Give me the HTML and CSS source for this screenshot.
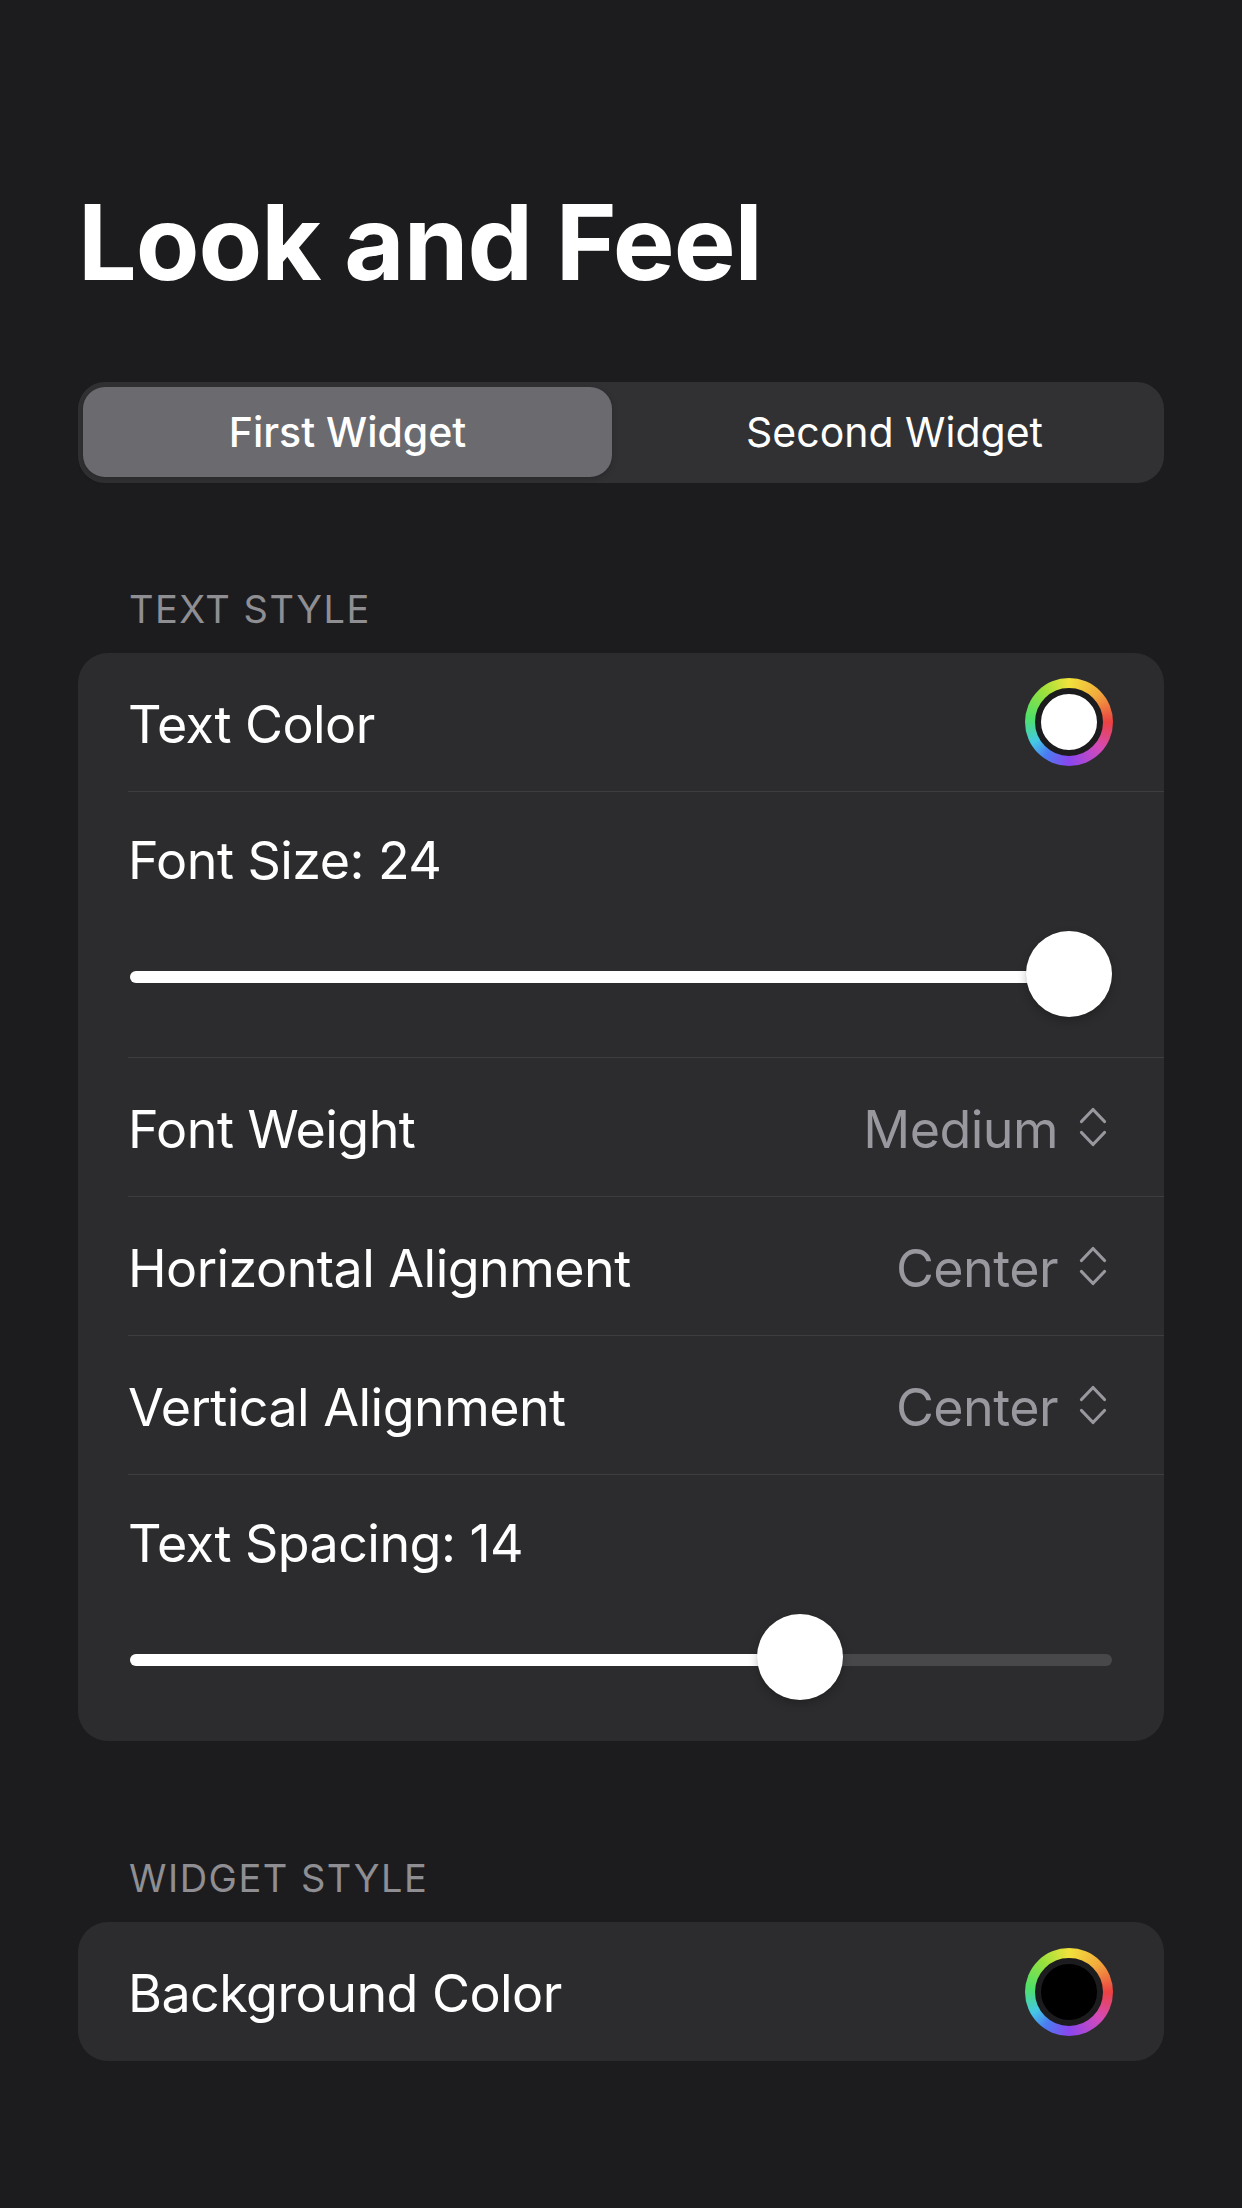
FILE: index.html
```html
<!DOCTYPE html>
<html lang="en">
<head>
<meta charset="utf-8">
<title>Look and Feel</title>
<link rel="stylesheet" href="styles.css">
</head>
<body>
<main class="screen">
  <h1 class="title">Look and Feel</h1>

  <div class="segmented">
    <div class="segment is-selected">First Widget</div>
    <div class="segment">Second Widget</div>
  </div>

  <section class="group group-first">
    <h2 class="group-header">TEXT STYLE</h2>
    <div class="card">
      <div class="row">
        <div class="row-inner">
          <span class="label">Text Color</span>
          <div class="well"><div class="well-inner well-white"></div></div>
        </div>
      </div>
      <div class="row">
        <div class="row-inner slider-row">
          <div class="label">Font Size: 24</div>
          <div class="slider" style="--value: 1">
            <div class="track"><div class="fill"></div></div>
            <div class="thumb"></div>
          </div>
        </div>
      </div>
      <div class="row">
        <div class="row-inner">
          <span class="label">Font Weight</span>
          <div class="picker">
            <span class="picker-value">Medium</span>
            <svg class="chevrons" width="28" height="40" viewBox="0 0 28 40"><path d="M2.5 14.5 L14 2.5 L25.5 14.5 M2.5 25.5 L14 37.5 L25.5 25.5"/></svg>
          </div>
        </div>
      </div>
      <div class="row">
        <div class="row-inner">
          <span class="label">Horizontal Alignment</span>
          <div class="picker">
            <span class="picker-value">Center</span>
            <svg class="chevrons" width="28" height="40" viewBox="0 0 28 40"><path d="M2.5 14.5 L14 2.5 L25.5 14.5 M2.5 25.5 L14 37.5 L25.5 25.5"/></svg>
          </div>
        </div>
      </div>
      <div class="row">
        <div class="row-inner">
          <span class="label">Vertical Alignment</span>
          <div class="picker">
            <span class="picker-value">Center</span>
            <svg class="chevrons" width="28" height="40" viewBox="0 0 28 40"><path d="M2.5 14.5 L14 2.5 L25.5 14.5 M2.5 25.5 L14 37.5 L25.5 25.5"/></svg>
          </div>
        </div>
      </div>
      <div class="row">
        <div class="row-inner slider-row">
          <div class="label">Text Spacing: 14</div>
          <div class="slider" style="--value: 0.7">
            <div class="track"><div class="fill"></div></div>
            <div class="thumb"></div>
          </div>
        </div>
      </div>
    </div>
  </section>

  <section class="group group-second">
    <h2 class="group-header">WIDGET STYLE</h2>
    <div class="card">
      <div class="row">
        <div class="row-inner">
          <span class="label">Background Color</span>
          <div class="well"><div class="well-inner well-black"></div></div>
        </div>
      </div>
    </div>
  </section>
</main>
</body>
</html>
```

FILE: styles.css
```css
* {
  box-sizing: border-box;
}

html, body {
  margin: 0;
  padding: 0;
  background: #1c1c1e;
}

body {
  font-family: Inter, "Noto Sans", "Liberation Sans", sans-serif;
  color: #ffffff;
  min-height: 2208px;
}

.screen {
  padding: 190px 78px 0 78px;
}

.title {
  margin: 0;
  font-size: 104px;
  line-height: 104px;
  font-weight: 700;
  letter-spacing: -1px;
}

.segmented {
  margin-top: 88px;
  height: 101px;
  padding: 5px 5px 6px 5px;
  background: #313134;
  border-radius: 27px;
  display: flex;
  gap: 18px;
}

.segment {
  flex: 1;
  display: flex;
  align-items: center;
  justify-content: center;
  font-size: 41px;
  line-height: 41px;
  font-weight: 400;
  border-radius: 22px;
  color: #ffffff;
}

.segment.is-selected {
  background: #6a6a6f;
  font-weight: 550;
  box-shadow: 0 2px 6px rgba(0, 0, 0, 0.18);
}

.group-first {
  margin-top: 107px;
}

.group-second {
  margin-top: 118px;
}

.group-header {
  margin: 0 0 25px 0;
  padding-left: 51px;
  font-size: 38px;
  line-height: 38px;
  font-weight: 400;
  color: #8e8e93;
  letter-spacing: 1.5px;
}

.card {
  background: #2c2c2e;
  border-radius: 30px;
  overflow: hidden;
}

.row {
  padding-left: 50px;
}

.row-inner {
  height: 139px;
  padding-right: 50px;
  border-bottom: 1px solid #3d3d41;
  display: flex;
  align-items: center;
  justify-content: space-between;
}

.row:last-child .row-inner {
  border-bottom: none;
}

.label {
  font-size: 52px;
  line-height: 52px;
  font-weight: 400;
  color: #ffffff;
  letter-spacing: -0.55px;
}

.row-inner > span.label {
  padding-top: 5px;
}

.slider-row {
  display: block;
  height: 266px;
  padding-top: 43px;
}

.slider {
  position: relative;
  margin: 46px 2px 0 2px;
  height: 88px;
  display: flex;
  align-items: center;
}

.track {
  position: relative;
  flex: 1;
  height: 12px;
  border-radius: 6px;
  background: #48484b;
}

.fill {
  position: absolute;
  left: 0;
  top: 0;
  bottom: 0;
  width: calc(var(--value) * (100% - 86px) + 43px);
  background: #ffffff;
  border-radius: 6px;
}

.thumb {
  position: absolute;
  top: calc(50% - 46px);
  left: calc(var(--value) * (100% - 86px));
  width: 86px;
  height: 86px;
  border-radius: 50%;
  background: #ffffff;
  box-shadow: 0 4px 10px rgba(0, 0, 0, 0.22), 0 0 1px rgba(0, 0, 0, 0.2);
}

.picker {
  display: flex;
  align-items: center;
  gap: 21px;
  margin-right: 7px;
}

.picker-value {
  font-size: 52px;
  line-height: 52px;
  padding-top: 5px;
  color: #98989e;
  letter-spacing: -0.55px;
}

.chevrons {
  display: block;
}

.chevrons path {
  fill: none;
  stroke: #98989e;
  stroke-width: 3.2;
  stroke-linecap: round;
  stroke-linejoin: round;
}

.well {
  width: 88px;
  height: 88px;
  border-radius: 50%;
  padding: 10px;
  margin-right: 1px;
  background: conic-gradient(from 0deg,
    #f2e23c 0deg,
    #f2ac3c 45deg,
    #ec4242 90deg,
    #d44ab8 130deg,
    #8a46ee 180deg,
    #4a7cf0 215deg,
    #44c8e6 240deg,
    #4ee06a 275deg,
    #9ae03c 320deg,
    #f2e23c 360deg);
}

.well-inner {
  width: 68px;
  height: 68px;
  border-radius: 50%;
  border: 6px solid #1c1c1e;
}

.well-white {
  background: #ffffff;
}

.well-black {
  background: #000000;
}
```
